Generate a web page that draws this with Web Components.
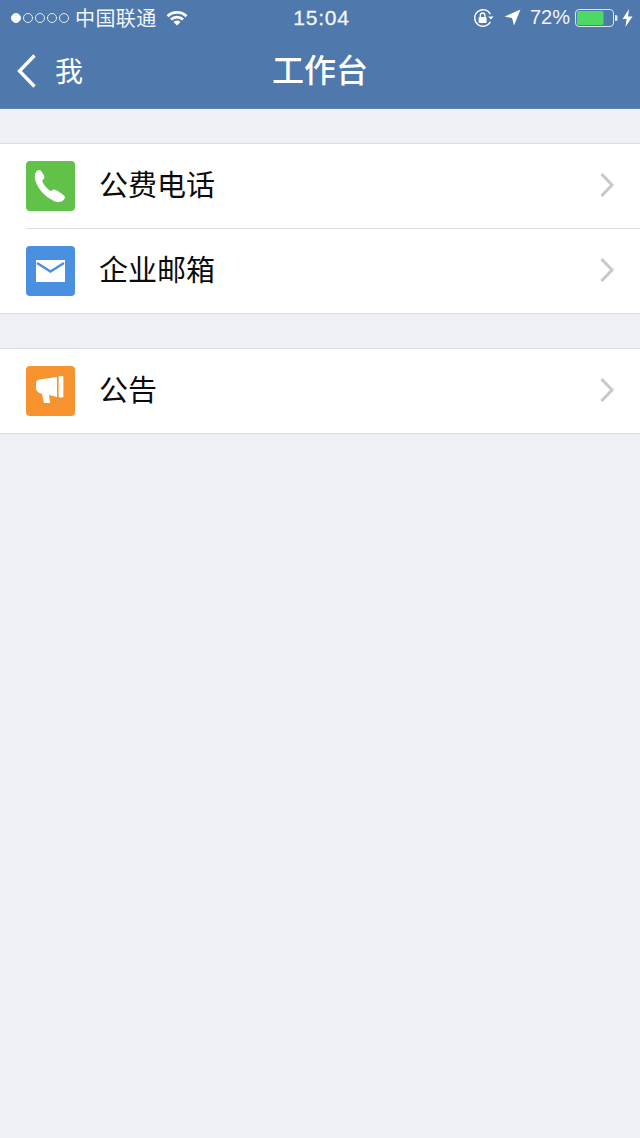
<!DOCTYPE html>
<html lang="zh">
<head>
<meta charset="utf-8">
<title>工作台</title>
<style>
    html, body { margin: 0; padding: 0; }
    body {
        width: 640px;
        height: 1138px;
        overflow: hidden;
        background: #eff0f5;
        font-family: "Liberation Sans", "Noto Sans CJK SC", sans-serif;
    }
</style>
</head>
<body>
<app-header title="工作台" back="我"></app-header>
<list-group>
    <list-row label="公费电话" color="#62c148" icon="phone"></list-row>
    <list-row label="企业邮箱" color="#4a90e0" icon="mail" last></list-row>
</list-group>
<list-group>
    <list-row label="公告" color="#f7932e" icon="horn" last></list-row>
</list-group>

<script>
// === Header (status bar + nav bar) ===
const headerTemplate = document.createElement('template');
headerTemplate.innerHTML = `
    <style>
        :host {
            display: block;
            height: 109px;
            box-sizing: border-box;
            background: #4f78ac;
            border-bottom: 1px solid #5d83b2;
            color: #fff;
        }
        .status {
            height: 35px;
            display: grid;
            grid-template-columns: 1fr auto 1fr;
            align-items: center;
            font-size: 20px;
            color: #f2f5f9;
        }
        .left, .right { display: flex; align-items: center; }
        .left { padding-left: 11px; }
        .right { justify-content: flex-end; padding-right: 7px; }
        .dots { display: flex; gap: 2px; margin-right: 6px; }
        .dot {
            width: 10px;
            height: 10px;
            box-sizing: border-box;
            border: 1px solid #e6ecf3;
            border-radius: 50%;
        }
        .dot.on { background: #fff; border-color: #fff; }
        .carrier { font-size: 20px; letter-spacing: 0.4px; }
        .wifi { margin-left: 9px; }
        .time { font-size: 21px; letter-spacing: 0.8px; font-weight: 500; -webkit-text-stroke: 0.3px #f2f5f9; margin-left: 3px; }
        .pct { font-size: 20px; margin: 0 5px 0 9px; letter-spacing: 0; }
        .lock { margin-right: 10px; }
        .bolt { margin-left: 4px; }
        .nav {
            height: 73px;
            display: grid;
            grid-template-columns: 1fr auto 1fr;
            align-items: center;
        }
        .back { display: flex; align-items: center; padding-left: 16px; font-size: 28px; margin-bottom: 1px; }
        .back svg { margin-right: 17px; }
        .back span { margin-bottom: 2px; }
        .title { font-size: 32px; letter-spacing: 0; margin-bottom: 7px; font-weight: 500; }
    </style>
    <div class="status">
        <div class="left">
            <div class="dots">
                <span class="dot on"></span><span class="dot"></span><span class="dot"></span><span class="dot"></span><span class="dot"></span>
            </div>
            <span class="carrier">中国联通</span>
            <svg class="wifi" width="22" height="16" viewBox="0 0 22 16">
                <path d="M0.6 5.2 A15 15 0 0 1 21.4 5.2 L19.5 7.2 A12.4 12.4 0 0 0 2.5 7.2 Z" fill="#fff"/>
                <path d="M4 8.6 A10 10 0 0 1 18 8.6 L16 10.6 A7.3 7.3 0 0 0 6 10.6 Z" fill="#fff"/>
                <path d="M7.5 12 A5 5 0 0 1 14.5 12 L11 15.6 Z" fill="#fff"/>
            </svg>
        </div>
        <div class="time">15:04</div>
        <div class="right">
            <svg class="lock" width="21" height="20" viewBox="0 0 21 20">
                <path d="M17.4 6.2 A8.3 8.3 0 1 0 17.4 13.8" fill="none" stroke="#fff" stroke-width="1.4"/>
                <path d="M15.2 8.4 h5.4 l-2.7 3.2 Z" fill="#fff"/>
                <rect x="5.6" y="9" width="8" height="6" rx="1" fill="#fff"/>
                <path d="M7.3 9 V7.3 a2.3 2.3 0 0 1 4.6 0 V9" fill="none" stroke="#fff" stroke-width="1.3"/>
            </svg>
            <svg width="17" height="17" viewBox="0 0 17 17">
                <path d="M16.5 0.5 L10 16.5 L8 9 L0.5 7.6 Z" fill="#fff"/>
            </svg>
            <span class="pct">72%</span>
            <svg width="43" height="18" viewBox="0 0 43 18">
                <rect x="0.5" y="0.5" width="38" height="17" rx="3.5" fill="none" stroke="#dfe6ef" stroke-width="1"/>
                <rect x="2" y="2" width="26.5" height="14" rx="1.5" fill="#4cd964"/>
                <path d="M40 6 h1 a1.5 1.5 0 0 1 1.5 1.5 v3 a1.5 1.5 0 0 1 -1.5 1.5 h-1 Z" fill="#dfe6ef"/>
            </svg>
            <svg class="bolt" width="11" height="18" viewBox="0 0 11 18">
                <path d="M7 0 L0.5 10 H4.6 L3.4 18 L10.5 7.4 H6 Z" fill="#fff"/>
            </svg>
        </div>
    </div>
    <div class="nav">
        <div class="back">
            <svg width="22" height="36" viewBox="0 0 22 36">
                <path d="M18.5 2.5 L3.5 18 L18.5 33.5" fill="none" stroke="#fff" stroke-width="3.4"/>
            </svg>
            <span id="back"></span>
        </div>
        <div class="title" id="title"></div>
        <div></div>
    </div>
`;

class AppHeader extends HTMLElement {
    constructor() {
        super();
        this.attachShadow({ mode: 'open' });
        this.shadowRoot.appendChild(headerTemplate.content.cloneNode(true));
    }

    connectedCallback() {
        this.shadowRoot.getElementById('title').textContent = this.getAttribute('title');
        this.shadowRoot.getElementById('back').textContent = this.getAttribute('back');
    }
}
customElements.define('app-header', AppHeader);


// === List group ===
const groupTemplate = document.createElement('template');
groupTemplate.innerHTML = `
    <style>
        :host {
            display: block;
            margin-top: 34px;
            background: #fff;
            border-top: 1px solid #dcdde1;
            border-bottom: 1px solid #dcdde1;
        }
    </style>
    <slot></slot>
`;

class ListGroup extends HTMLElement {
    constructor() {
        super();
        this.attachShadow({ mode: 'open' });
        this.shadowRoot.appendChild(groupTemplate.content.cloneNode(true));
    }
}
customElements.define('list-group', ListGroup);


// === List row ===
const ICONS = {
    phone: `<path d="M11 11 C12 9.5 14 8.5 15.5 9.5 C17 10.5 19 14 19.5 16 C19.8 17.5 18 18.5 17.2 19.5 C17.5 22 22 28 25.5 30 C26.5 29.5 28 28 29.5 28.5 C32 29.5 37 32.5 39.5 35 C40.5 36.5 39.5 38.5 37.5 40 C35 41.5 31.5 41.5 28 39.5 C20 35.5 13 28 10.5 20 C9.5 16.5 9.5 13 11 11 Z" fill="#fff"/>`,
    mail: `<path d="M11 14 H40 V36 H11 Z" fill="#fff"/><path d="M12 17 L25.5 25.5 L39 17" fill="none" stroke="#4a90e0" stroke-width="2.4"/>`,
    horn: `<path d="M14.5 13.5 L32 11 V31 L24 29 L25 37 H19 L17 28 C13.5 27 11 25 11 22 V17 C11 15 12.5 13.8 14.5 13.5 Z" fill="#fff"/><rect x="33.6" y="10" width="4.8" height="21.5" rx="0.8" fill="#fff"/>`
};

const rowTemplate = document.createElement('template');
rowTemplate.innerHTML = `
    <style>
        :host { display: block; }
        .row {
            height: 84px;
            display: flex;
            align-items: center;
            padding-left: 26px;
            padding-right: 25px;
            box-sizing: border-box;
        }
        .icon {
            width: 49px;
            height: 50px;
            border-radius: 4px;
            flex: none;
            margin-right: 24px;
        }
        .icon svg { display: block; margin-left: -1px; }
        .label {
            flex: 1;
            font-size: 29px;
            color: #0b0b0b;
            margin-bottom: 7px;
        }
        .chev { margin-bottom: 2px; }
        .sep {
            height: 1px;
            margin-left: 26px;
            background: #dcdde1;
        }
    </style>
    <div class="row">
        <div class="icon"><svg width="50" height="50" viewBox="0 0 50 50"></svg></div>
        <div class="label"></div>
        <svg class="chev" width="16" height="26" viewBox="0 0 16 26">
            <path d="M2.5 2 L13 13 L2.5 24" fill="none" stroke="#c7c7cc" stroke-width="3"/>
        </svg>
    </div>
    <div class="sep"></div>
`;

class ListRow extends HTMLElement {
    constructor() {
        super();
        this.attachShadow({ mode: 'open' });
        this.shadowRoot.appendChild(rowTemplate.content.cloneNode(true));
    }

    connectedCallback() {
        const root = this.shadowRoot;
        root.querySelector('.label').textContent = this.getAttribute('label');
        root.querySelector('.icon').style.background = this.getAttribute('color');
        root.querySelector('.icon svg').innerHTML = ICONS[this.getAttribute('icon')];
        if (this.hasAttribute('last')) {
            root.querySelector('.sep').remove();
        }
    }
}
customElements.define('list-row', ListRow);
</script>
</body>
</html>
